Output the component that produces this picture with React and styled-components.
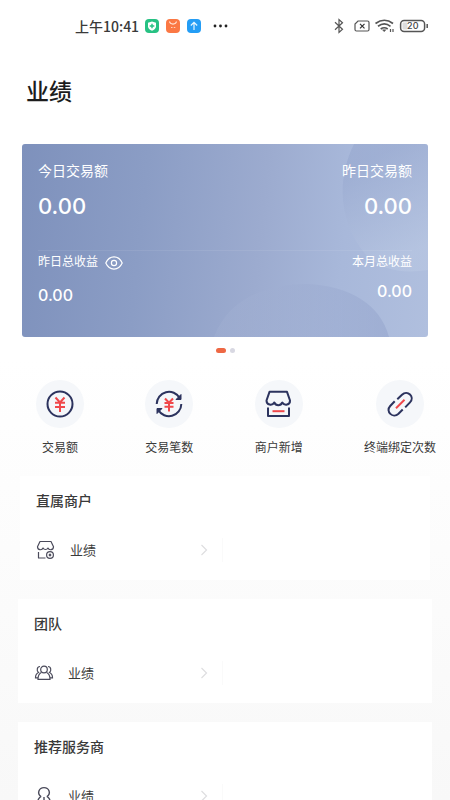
import { useState } from "react";
import styled, { createGlobalStyle } from "styled-components";

const actions = [
  { label: "交易额", icon: <AmountIcon /> },
  { label: "交易笔数", icon: <CountIcon /> },
  { label: "商户新增", icon: <StoreIcon /> },
  { label: "终端绑定次数", icon: <LinkIcon /> },
];

const groups = [
  { title: "直属商户", icon: <ShopIcon />, inset: 20 },
  { title: "团队", icon: <TeamIcon />, inset: 18 },
  { title: "推荐服务商", icon: <PartnerIcon />, inset: 18 },
];

function App() {
  const [visible, setVisible] = useState(true);
  const money = (value) => (visible ? value : "****");

  return (
    <Page>
      <GlobalStyle />
      <StatusBar>
        <StatusGroup>
          <Clock>上午10:41</Clock>
          <AppIcons />
        </StatusGroup>
        <DeviceIcons />
      </StatusBar>

      <Title>业绩</Title>

      <Card>
        <CardArt />
        <CardRow>
          <Stat>
            <StatLabel>今日交易额</StatLabel>
            <StatValue>{money("0.00")}</StatValue>
          </Stat>
          <Stat $end>
            <StatLabel>昨日交易额</StatLabel>
            <StatValue>{money("0.00")}</StatValue>
          </Stat>
        </CardRow>
        <CardRow $divided>
          <Stat>
            <StatHead>
              <StatLabel $small>昨日总收益</StatLabel>
              <EyeButton
                type="button"
                aria-label="显示或隐藏金额"
                onClick={() => setVisible(!visible)}
              >
                <EyeIcon />
              </EyeButton>
            </StatHead>
            <StatValue $small>{money("0.00")}</StatValue>
          </Stat>
          <Stat $end>
            <StatLabel $small>本月总收益</StatLabel>
            <StatValue $small>{money("0.00")}</StatValue>
          </Stat>
        </CardRow>
      </Card>

      <Dots>
        <Dot $active />
        <Dot />
      </Dots>

      <Actions>
        {actions.map((action) => (
          <Action key={action.label} type="button">
            <Circle>{action.icon}</Circle>
            {action.label}
          </Action>
        ))}
      </Actions>

      <Groups>
        {groups.map((group) => (
          <Group key={group.title} $inset={group.inset}>
            <GroupTitle>{group.title}</GroupTitle>
            <Entries>
              <Entry href="#">
                {group.icon}
                <span>业绩</span>
                <Chevron />
              </Entry>
            </Entries>
          </Group>
        ))}
      </Groups>
    </Page>
  );
}

function AppIcons() {
  return (
    <svg width="86" height="16" viewBox="0 0 86 16" fill="none">
      <rect x="1" y="1" width="14" height="14" rx="4" fill="#27c183" />
      <path d="M8 3.500l4 1.300v3.400c0 2.200-1.700 3.700-4 4.500-2.300-.8-4-2.300-4-4.500V4.800z" fill="#fff" />
      <path d="M8 5.700v4.600M5.700 8h4.600" stroke="#27c183" strokeWidth="1.400" />
      <rect x="22" y="1" width="14" height="14" rx="4" fill="#fb7844" />
      <path d="M25.500 3.500c.6 3.400 6.400 3.400 7 0" stroke="#ffe3d5" strokeWidth="1.200" />
      <path d="M27 9.500h1.500M29.800 9.500h1.500" stroke="#ffd2bd" strokeWidth="1.200" />
      <rect x="43" y="1" width="14" height="14" rx="4" fill="#249df5" />
      <path d="M50 12V4.500M46.800 7.500L50 4.300l3.200 3.200" stroke="#e5f5ff" strokeWidth="1.200" />
      <circle cx="71" cy="8" r="1.400" fill="#222" />
      <circle cx="76.500" cy="8" r="1.400" fill="#222" />
      <circle cx="82" cy="8" r="1.400" fill="#222" />
    </svg>
  );
}

function DeviceIcons() {
  return (
    <svg width="96" height="18" viewBox="0 0 96 18" fill="none" stroke="#555" strokeWidth="1.200">
      <path d="M2 5.300l7.500 7L6 15.500v-13l3.500 3.200L2 12.700" />
      <path d="M25 4h9.500q1.500 0 1.500 1.500v7q0 1.500-1.500 1.500h-11q-1.500 0-1.500-1.500V7z" />
      <path d="M27 6.800l4.500 4.500M31.500 6.800L27 11.300" stroke="#333" />
      <path d="M42.500 6.500q9-6.500 17.500 0M45 9.300q6.300-4.800 12.500 0M47.700 12q3.500-2.500 7 0" strokeWidth="1.700" />
      <path d="M49.500 12.800l1.700 1.900 1.700-1.900z" fill="#555" strokeWidth="0.500" />
      <path d="M57.500 12v3M60 12v3" />
      <rect x="67.600" y="3.500" width="24" height="11" rx="3.500" strokeWidth="1.500" />
      <rect x="69.500" y="5.500" width="5" height="7" rx="1" fill="#ddd" stroke="none" />
      <path d="M94.200 7v4" strokeWidth="1.500" />
      <text
        x="79.800"
        y="12.300"
        textAnchor="middle"
        fontFamily="Inter, sans-serif"
        fontSize="9"
        fontWeight="500"
        fill="#444"
        stroke="none"
      >
        20
      </text>
    </svg>
  );
}

function CardArt() {
  return (
    <Art viewBox="0 0 406 193" preserveAspectRatio="none" aria-hidden="true">
      <defs>
        <linearGradient id="orb" x1="0" y1="0" x2="0.300" y2="1">
          <stop offset="0.200" stopColor="#93a4cc" stopOpacity="0.480" />
          <stop offset="1" stopColor="#bccae4" stopOpacity="0.450" />
        </linearGradient>
        <linearGradient id="hill" x1="0" y1="0" x2="1" y2="0">
          <stop offset="0" stopColor="#a8b6d6" stopOpacity="0.250" />
          <stop offset="1" stopColor="#8f9fc9" stopOpacity="0.450" />
        </linearGradient>
      </defs>
      <path d="M332 0C313 38 318 82 345 112Q366 132 406 126V0z" fill="url(#orb)" />
      <path d="M192 193C207 153 247 140 285 140C328 142 358 160 367 193z" fill="url(#hill)" />
    </Art>
  );
}

function EyeIcon() {
  return (
    <svg width="18" height="16" viewBox="0 0 18 16" fill="none" stroke="#fff" strokeWidth="1.200">
      <path d="M.8 8C4.500-.1 13.500-.1 17.200 8C13.500 16.100 4.500 16.100.8 8z" />
      <circle cx="9" cy="8" r="2.600" />
    </svg>
  );
}

function AmountIcon() {
  return (
    <svg width="30" height="30" viewBox="0 0 30 30" fill="none" stroke="#2c335e" strokeWidth="2">
      <circle cx="15" cy="15" r="12.500" />
      <path d="M10.500 8.500l4.500 5 4.500-5M10 13.700h10M10 18h10M15 13.500V23" stroke="#f0484b" />
    </svg>
  );
}

function CountIcon() {
  return (
    <svg width="30" height="30" viewBox="0 0 30 30" fill="none" stroke="#2c335e" strokeWidth="2">
      <path d="M2.700 15A12.300 12.300 0 0 1 25.700 9M27.300 15A12.300 12.300 0 0 1 4.300 21" />
      <path d="M27 5.500v5h-5zM3 24.500v-5h5z" fill="#2c335e" strokeWidth="1" />
      <path d="M11 9.500l4 4.300 4-4.300M10.500 14h9M10.500 17.700h9M15 14v8.500" stroke="#f0484b" />
    </svg>
  );
}

function StoreIcon() {
  return (
    <svg width="30" height="30" viewBox="0 0 30 30" fill="none" stroke="#2c335e" strokeWidth="2" strokeLinejoin="round">
      <path d="M5.500 2.800h17.500l3 8.700c.3 4.500-5.500 5.500-7.700 2-1.500 3.500-6.500 3.500-8 0-2 3.500-8 2.500-7.800-2z" />
      <path d="M4 18.500V27h21v-8.500" />
      <path d="M8.500 22.200h12" stroke="#f0484b" />
    </svg>
  );
}

function LinkIcon() {
  return (
    <svg width="30" height="30" viewBox="0 0 30 30" fill="none" stroke="#2c335e" strokeWidth="2">
      <path d="M12.300 10.200l4.700-4.500c5.500-5.200 13.200 2.200 8 7.700l-4.800 5M17.700 20.500L13.500 24.700c-5.500 5.200-13.500-2.200-8.300-7.700l4.500-4.700" />
      <path d="M11 19.300l8.500-8.600" stroke="#f0484b" />
    </svg>
  );
}

function ShopIcon() {
  return (
    <svg width="20" height="20" viewBox="0 0 20 20" fill="none" stroke="#4b4b5b" strokeWidth="1.200" strokeLinejoin="round">
      <path d="M4 1.500h11L17.500 6.700c0 3.500-4.500 4-5.500 1.300-1 2-4 2-5 0C6 10.700 1.500 10.200 1.500 6.700z" />
      <path d="M2.500 12v6h7" />
      <circle cx="14" cy="15" r="3.400" />
      <path d="M14 13.300l1.600 1.700-1.600 1.700-1.600-1.700z" fill="#4b4b5b" stroke="none" />
    </svg>
  );
}

function TeamIcon() {
  return (
    <svg width="20" height="20" viewBox="0 0 20 20" fill="none" stroke="#4b4b5b" strokeWidth="1.200">
      <circle cx="10" cy="6.500" r="3.300" />
      <path d="M7.300 9.500C4.500 11 4 13.500 4 16.300h12c0-2.800-.5-5.300-3.300-6.800" />
      <path d="M6 3.500C3 3.500 2.300 7.800 4.500 9.500 2.200 10.500 1.500 12.500 1.500 14.800H4M14 3.500c3 0 3.700 4.300 1.500 6 2.300 1 3 3 3 5.300H16" />
    </svg>
  );
}

function PartnerIcon() {
  return (
    <svg width="20" height="20" viewBox="0 0 20 20" fill="none" stroke="#4b4b5b" strokeWidth="1.400">
      <path d="M7 10.500C2.700 7.500 4.800 1.600 10 1.600s7.300 5.900 3 8.900" />
      <path d="M7.200 10.300C5 11.300 3.600 13.500 3.300 18h13.400c-.3-4.500-1.700-6.700-3.900-7.700M10 11v4" />
    </svg>
  );
}

function Chevron() {
  return (
    <svg width="8" height="12" viewBox="0 0 8 12" fill="none" stroke="#dedee0" strokeWidth="1.200">
      <path d="M1.500 1L6.500 6l-5 5" />
    </svg>
  );
}

const GlobalStyle = createGlobalStyle`
  * {
    box-sizing: border-box;
  }

  html {
    scrollbar-width: none;
  }

  body {
    margin: 0;
    background: #f8f8f8;
    color: #3a3a3a;
    font-family: "Noto Sans CJK SC", sans-serif;
  }

  svg {
    display: block;
    flex: none;
  }

  button {
    padding: 0;
    border: 0;
    background: none;
    color: inherit;
    font-family: inherit;
    cursor: pointer;
  }
`;

const Page = styled.main`
  min-height: 100vh;
  padding-bottom: 20px;
  background: linear-gradient(#fff 0, #fff 360px, #f8f8f8 800px);
`;

const StatusBar = styled.header`
  display: flex;
  justify-content: space-between;
  align-items: center;
  height: 52px;
  padding: 0 21px 0 75px;
`;

const StatusGroup = styled.div`
  display: flex;
  align-items: center;
  gap: 5px;
`;

const Clock = styled.time`
  font-size: 14px;
  font-weight: 500;
  line-height: 20px;
`;

const Title = styled.h1`
  margin: 0;
  padding: 22px 26px 38px;
  color: #1c1c1c;
  font-size: 23px;
  font-weight: 500;
  line-height: 32px;
`;

const Card = styled.section`
  position: relative;
  margin: 0 22px;
  padding: 16px 16px 32px;
  border-radius: 3px;
  background: linear-gradient(96deg, #7e91bc 0%, #8b9dc5 30%, #9cabcf 58%, #a8b8da 78%, #b0bfde 100%);
  color: #fff;
  overflow: hidden;
`;

const Art = styled.svg`
  position: absolute;
  inset: 0;
  width: 100%;
  height: 100%;
`;

const CardRow = styled.div`
  position: relative;
  display: flex;
  justify-content: space-between;
  align-items: flex-start;
  margin-top: ${(props) => (props.$divided ? "28px" : "0")};
  border-top: ${(props) => (props.$divided ? "1px solid rgb(255 255 255 / 8%)" : "0")};
`;

const Stat = styled.div`
  display: flex;
  flex-direction: column;
  align-items: ${(props) => (props.$end ? "flex-end" : "flex-start")};
  gap: 10px;
`;

const StatHead = styled.div`
  display: flex;
  align-items: flex-start;
  gap: 7px;
  height: 24px;
`;

const StatLabel = styled.span`
  font-size: ${(props) => (props.$small ? "12px" : "14px")};
  line-height: 20px;
`;

const StatValue = styled.strong`
  font-family: Inter, "Noto Sans CJK SC", sans-serif;
  font-size: ${(props) => (props.$small ? "16px" : "22px")};
  font-weight: 500;
  line-height: ${(props) => (props.$small ? "20px" : "32px")};
`;

const EyeButton = styled.button`
  display: flex;
  padding-top: 4px;
`;

const Dots = styled.div`
  display: flex;
  justify-content: center;
  gap: 4px;
  padding: 11px 0 27px;
`;

const Dot = styled.span`
  width: ${(props) => (props.$active ? "10px" : "5px")};
  height: 5px;
  border-radius: 3px;
  background: ${(props) => (props.$active ? "#ee6844" : "#d8d8e2")};
`;

const Actions = styled.nav`
  display: flex;
  justify-content: space-between;
  padding: 0 14px 21px 36px;
`;

const Action = styled.button`
  display: flex;
  flex-direction: column;
  align-items: center;
  gap: 11px;
  font-size: 12px;
  line-height: 16px;
`;

const Circle = styled.span`
  display: flex;
  justify-content: center;
  align-items: center;
  width: 48px;
  height: 48px;
  border-radius: 50%;
  background: #f5f7fa;
`;

const Groups = styled.div`
  display: flex;
  flex-direction: column;
  gap: 19px;
`;

const Group = styled.section`
  margin: 0 ${(props) => props.$inset}px;
  padding: 14px 20px 18px 16px;
  background: #fff;
`;

const GroupTitle = styled.h2`
  margin: 0 0 28px;
  font-size: 14px;
  font-weight: 500;
  line-height: 20px;
`;

const Entries = styled.div`
  display: grid;
  grid-template-columns: 1fr 1fr;
`;

const Entry = styled.a`
  display: flex;
  align-items: center;
  height: 24px;
  padding-right: 14px;
  border-right: 1px solid #fafafa;
  color: #3a3a3a;
  font-size: 13px;
  line-height: 20px;
  text-decoration: none;

  span {
    flex: 1;
    margin-left: 14px;
  }
`;

export default App;
